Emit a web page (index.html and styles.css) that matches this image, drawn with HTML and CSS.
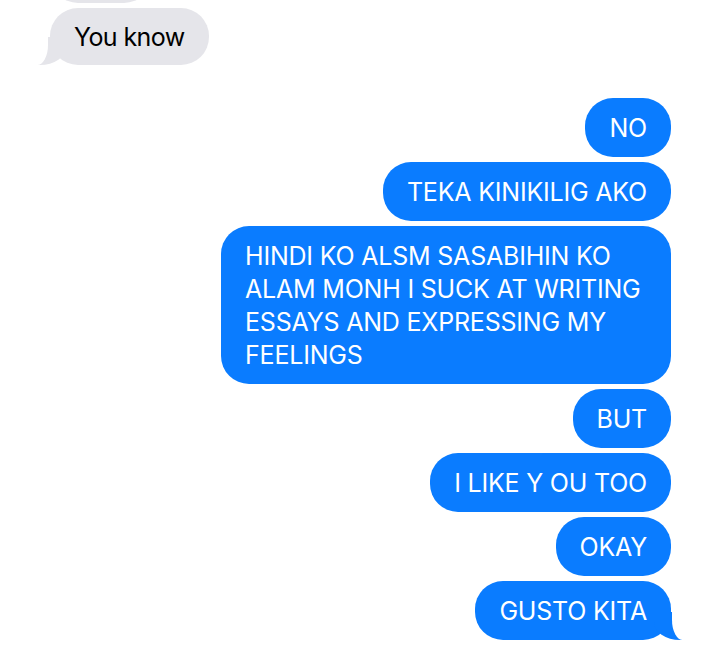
FILE: index.html
```html
<!DOCTYPE html>
<html lang="en">

<head>
    <meta charset="UTF-8">
    <meta name="viewport" content="width=device-width, initial-scale=1.0">
    <title>Messages</title>
    <link rel="stylesheet" href="styles.css">
</head>

<body>
    <div class="thread">
        <!-- Incoming messages (first one is scrolled out of view) -->
        <div class="group received">
            <p class="bubble hidden-text">&nbsp;</p>
            <p class="bubble tail">You know</p>
        </div>

        <!-- Outgoing messages -->
        <div class="group sent">
            <p class="bubble">NO</p>
            <p class="bubble">TEKA KINIKILIG AKO</p>
            <p class="bubble">HINDI KO ALSM SASABIHIN KO ALAM MONH I SUCK AT WRITING ESSAYS AND EXPRESSING MY FEELINGS</p>
            <p class="bubble">BUT</p>
            <p class="bubble">I LIKE Y OU TOO</p>
            <p class="bubble">OKAY</p>
            <p class="bubble tail">GUSTO KITA</p>
        </div>
    </div>
</body>

</html>
```

FILE: styles.css
```css
body {
    font-family: Inter, "Noto Sans", sans-serif;
    background: #fff;
    margin: 0;
    padding: 0;
    overflow: hidden;
}

.thread {
    margin-top: -54px;
    padding: 0 49px 0 50px;
}

.group {
    display: flex;
    flex-direction: column;
    gap: 5px;
}

.received {
    align-items: flex-start;
}

.sent {
    align-items: flex-end;
    margin-top: 33px;
}

.bubble {
    position: relative;
    margin: 0;
    padding: 14px 24px 12px;
    max-width: 402px;
    border-radius: 28px;
    font-size: 25px;
    line-height: 33px;
    letter-spacing: -0.2px;
}

.hidden-text {
    width: 54px;
}

.received .bubble {
    background: #e5e5ea;
    color: #000;
    padding-top: 13px;
    padding-bottom: 11px;
    letter-spacing: -0.6px;
}

.sent .bubble {
    background: #0a7cff;
    color: #fff;
}

/* bubble tails */
.bubble.tail::before,
.bubble.tail::after {
    content: "";
    position: absolute;
    bottom: 0;
    height: 28px;
}

.sent .tail::before {
    right: -11px;
    width: 28px;
    background: #0a7cff;
    border-bottom-left-radius: 26px 18px;
}

.sent .tail::after {
    right: -23px;
    width: 22px;
    background: #fff;
    border-bottom-left-radius: 11px 20px;
}

.received .tail::before {
    left: -12px;
    width: 28px;
    background: #e5e5ea;
    border-bottom-right-radius: 26px 18px;
}

.received .tail::after {
    left: -24px;
    width: 22px;
    background: #fff;
    border-bottom-right-radius: 11px 20px;
}
```
